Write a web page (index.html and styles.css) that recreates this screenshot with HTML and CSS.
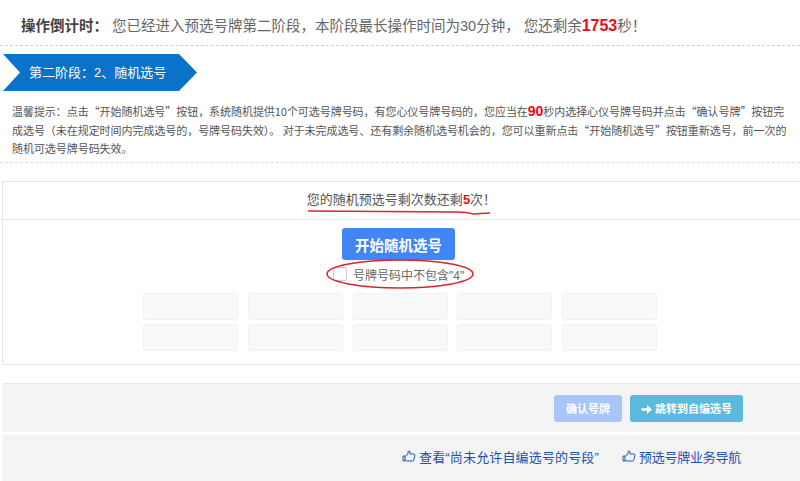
FILE: index.html
```html
<!DOCTYPE html>
<html lang="zh-CN">
<head>
<meta charset="utf-8">
<title>随机选号</title>
<link rel="stylesheet" href="styles.css">
</head>
<body>
<div class="countdown"><b class="cd-label">操作倒计时：</b><span class="cd-text">您已经进入预选号牌第二阶段，本阶段最长操作时间为30分钟， 您还剩余<b class="red">1753</b>秒！</span></div>
<div class="stage-wrap">
  <div class="stage">第二阶段：2、随机选号</div>
</div>
<p class="tip">温馨提示：点击“开始随机选号”按钮，系统随机提供10个可选号牌号码，有您心仪号牌号码的，您应当在<b class="red big">90</b>秒内选择心仪号牌号码并点击“确认号牌”按钮完成选号（未在规定时间内完成选号的，号牌号码失效）。 对于未完成选号、还有剩余随机选号机会的，您可以重新点击“开始随机选号”按钮重新选号，前一次的随机可选号牌号码失效。</p>
<section class="panel">
  <div class="panel-head"><span class="remain">您的随机预选号剩次数还剩<b class="red">5</b>次！
    <svg class="underline" viewBox="0 0 184 6" aria-hidden="true"><path d="M1 2 L150 3 Q160 3 166 5 L183 4" fill="none" stroke="#e0252c" stroke-width="1.5"/></svg>
  </span></div>
  <div class="panel-body">
    <button class="start">开始随机选号</button>
    <label class="check">
      <span class="box"></span><span>号牌号码中不包含"4"</span>
      <svg class="ellipse" viewBox="0 0 150 32" aria-hidden="true"><ellipse cx="75" cy="16" rx="73" ry="14" fill="none" stroke="#d9252c" stroke-width="1.5"/></svg>
    </label>
    <div class="slots">
      <div class="slot"></div><div class="slot"></div><div class="slot"></div><div class="slot"></div><div class="slot"></div>
      <div class="slot"></div><div class="slot"></div><div class="slot"></div><div class="slot"></div><div class="slot"></div>
    </div>
  </div>
</section>
<div class="actions">
  <button class="btn confirm">确认号牌</button>
  <button class="btn jump"><svg class="arrow" viewBox="0 0 10 10" aria-hidden="true"><path d="M0 3.8H5V1L9.6 5 5 9V6.2H0Z" fill="#fff"/></svg>跳转到自编选号</button>
</div>
<div class="links">
  <a class="link link-view"><svg class="hand" viewBox="0 0 14 12" aria-hidden="true"><path d="M1 6h2v5H1zM3 6.5 6 4V1.5Q7 .5 8 1.5V4h4q1 .2 1 1l-1.2 5q-.2 1-1 1H5L3 10" fill="none" stroke="#1f57b5" stroke-width="1"/></svg>查看“尚未允许自编选号的号段”</a>
  <a class="link link-nav"><svg class="hand" viewBox="0 0 14 12" aria-hidden="true"><path d="M1 6h2v5H1zM3 6.5 6 4V1.5Q7 .5 8 1.5V4h4q1 .2 1 1l-1.2 5q-.2 1-1 1H5L3 10" fill="none" stroke="#1f57b5" stroke-width="1"/></svg>预选号牌业务导航</a>
</div>
</body>
</html>
```
FILE: styles.css
```css
* { box-sizing: border-box; }
html, body { margin: 0; padding: 0; }
body {
  width: 800px;
  height: 481px;
  overflow: hidden;
  background: #fff;
  color: #555;
  font-family: "Liberation Sans", "Noto Sans CJK SC", sans-serif;
}
.red { color: #f00a12; font-weight: 700; }
.countdown {
  height: 46px;
  padding: 16px 0 0 21px;
  line-height: 20px;
  border-bottom: 1px dashed #ccc;
  font-size: 14.5px;
  white-space: nowrap;
}
.cd-label { color: #444; margin-right: 4px; }
.cd-text { color: #666; }
.cd-text .red { font-size: 16px; }
.stage-wrap { padding: 8px 0 0 3px; }
.stage {
  width: 194px;
  height: 37px;
  padding: 1px 0 0 26px;
  line-height: 36px;
  font-size: 13px;
  color: #fff;
  background: #0a72c8;
  clip-path: polygon(0 0, 176px 0, 194px 50%, 176px 100%, 0 100%, 17px 50%);
}
.tip {
  margin: 11px 0 0;
  height: 61px;
  padding: 0 12px 0 12px;
  font-family: "Noto Sans CJK SC", "Liberation Sans", sans-serif;
  font-size: 11px;
  letter-spacing: -0.05px;
  line-height: 18.5px;
  color: #555;
  border-bottom: 1px dashed #ddd;
}
.tip .big { font-family: "Liberation Sans", sans-serif; font-size: 14px; line-height: 10px; }
.panel {
  margin: 18px 0 0 2px;
  height: 184px;
  border: 1px solid #e4e4e4;
  border-right: 0;
}
.panel-head {
  height: 38px;
  border-bottom: 1px solid #e4e4e4;
  display: flex;
  justify-content: center;
  padding: 9px 0 0 0;
  font-size: 13px;
  line-height: 17px;
  color: #555;
}
.remain { position: relative; height: 20px; }
.underline { position: absolute; left: 0; top: 18px; width: 184px; height: 6px; }
.panel-body { display: flex; flex-direction: column; align-items: flex-start; padding-top: 8px; }
.start {
  width: 113px;
  height: 32px;
  margin-left: 339px;
  border: 0;
  border-radius: 3px;
  background: #4285f4;
  color: #fff;
  font: 700 14.5px "Liberation Sans", "Noto Sans CJK SC", sans-serif;
  padding: 0;
}
.check {
  position: relative;
  display: flex;
  align-items: center;
  gap: 6px;
  height: 28px;
  margin-left: 322px;
  font-size: 12px;
  color: #666;
  width: 150px;
  padding-left: 8px;
}
.box { width: 14px; height: 14px; border: 1px solid #ccc; border-radius: 2px; background: #fff; }
.ellipse { position: absolute; left: 0; top: -2px; width: 150px; height: 32px; }
.slots {
  margin: 5px 0 0 140px;
  display: grid;
  grid-template-columns: repeat(5, 95px);
  grid-auto-rows: 27px;
  column-gap: 9.75px;
  row-gap: 4px;
}
.slot { background: #f9f9f9; border: 1px solid #f1f1f1; border-radius: 3px; }
.actions {
  margin: 18px 0 0 2px;
  height: 49px;
  background: #f4f4f4;
  border-top: 1px solid #e8e8e8;
  display: flex;
  justify-content: flex-end;
  align-items: center;
  gap: 8px;
  padding-right: 57px;
}
.btn {
  height: 27px;
  border: 0;
  border-radius: 3px;
  padding: 0;
  color: #fff;
  font: 700 11px "Liberation Sans", "Noto Sans CJK SC", sans-serif;
}
.confirm { width: 68px; background: #a8c6f7; }
.jump { width: 113px; background: #5bb9dc; }
.arrow { width: 12px; height: 11px; margin-right: 2px; vertical-align: -2px; }
.links {
  margin: 3px 0 0 2px;
  height: 47px;
  background: #f4f4f4;
  display: flex;
  justify-content: flex-end;
  align-items: center;
  gap: 23px;
  padding: 0 59px 5px 0;
  font-size: 13px;
}
.link { color: #1f4fb0; display: flex; align-items: center; gap: 3px; }
.link-view { letter-spacing: 0.15px; }
.link-nav { letter-spacing: -0.25px; }
.hand { width: 14px; height: 12px; }
```
